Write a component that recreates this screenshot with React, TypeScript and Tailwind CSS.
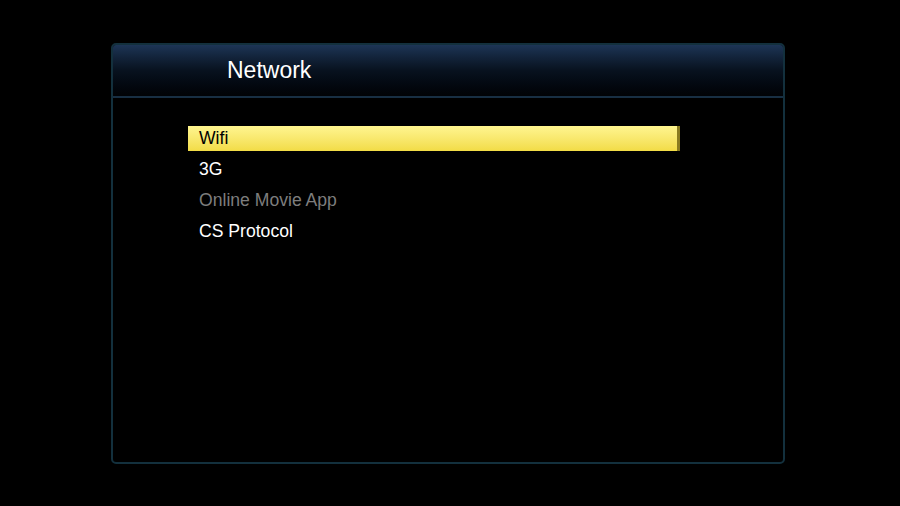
const ITEMS = [
  { label: "Wifi", state: "active" },
  { label: "3G", state: "normal" },
  { label: "Online Movie App", state: "disabled" },
  { label: "CS Protocol", state: "normal" },
];

export default function App() {
  return (
    <div className="w-[900px] h-[506px] bg-black overflow-hidden pt-[43px] pl-[111px]" style={{ fontFamily: '"Liberation Sans", Arial, sans-serif' }}>
      <div className="w-[674px] h-[421px] border-2 border-[#13303d] rounded-[5px] flex flex-col overflow-hidden">
        {/* Header */}
        <div className="h-[53px] shrink-0 flex items-center pl-[114px] bg-gradient-to-b from-[#1d3556] via-[#08121f] to-[#010306] border-b-2 border-[#182f43]">
          <span className="text-white text-[23px] leading-none mb-[1px]">Network</span>
        </div>

        {/* Menu list */}
        <div className="flex flex-col gap-[6px] pt-[28px] pl-[75px]">
          {ITEMS.map((it) => (
            <div
              key={it.label}
              className={
                it.state === "active"
                  ? "w-[492px] h-[25px] flex items-center pl-[11px] bg-gradient-to-b from-[#fff58f] to-[#f2dc45] border-r-[3px] border-[#8a7c20] text-black text-[17.6px]"
                  : it.state === "disabled"
                  ? "w-[492px] h-[25px] flex items-center pl-[11px] text-[#7d7d7d] text-[17.6px]"
                  : "w-[492px] h-[25px] flex items-center pl-[11px] text-white text-[17.6px]"
              }
            >
              {it.label}
            </div>
          ))}
        </div>
      </div>
    </div>
  );
}
